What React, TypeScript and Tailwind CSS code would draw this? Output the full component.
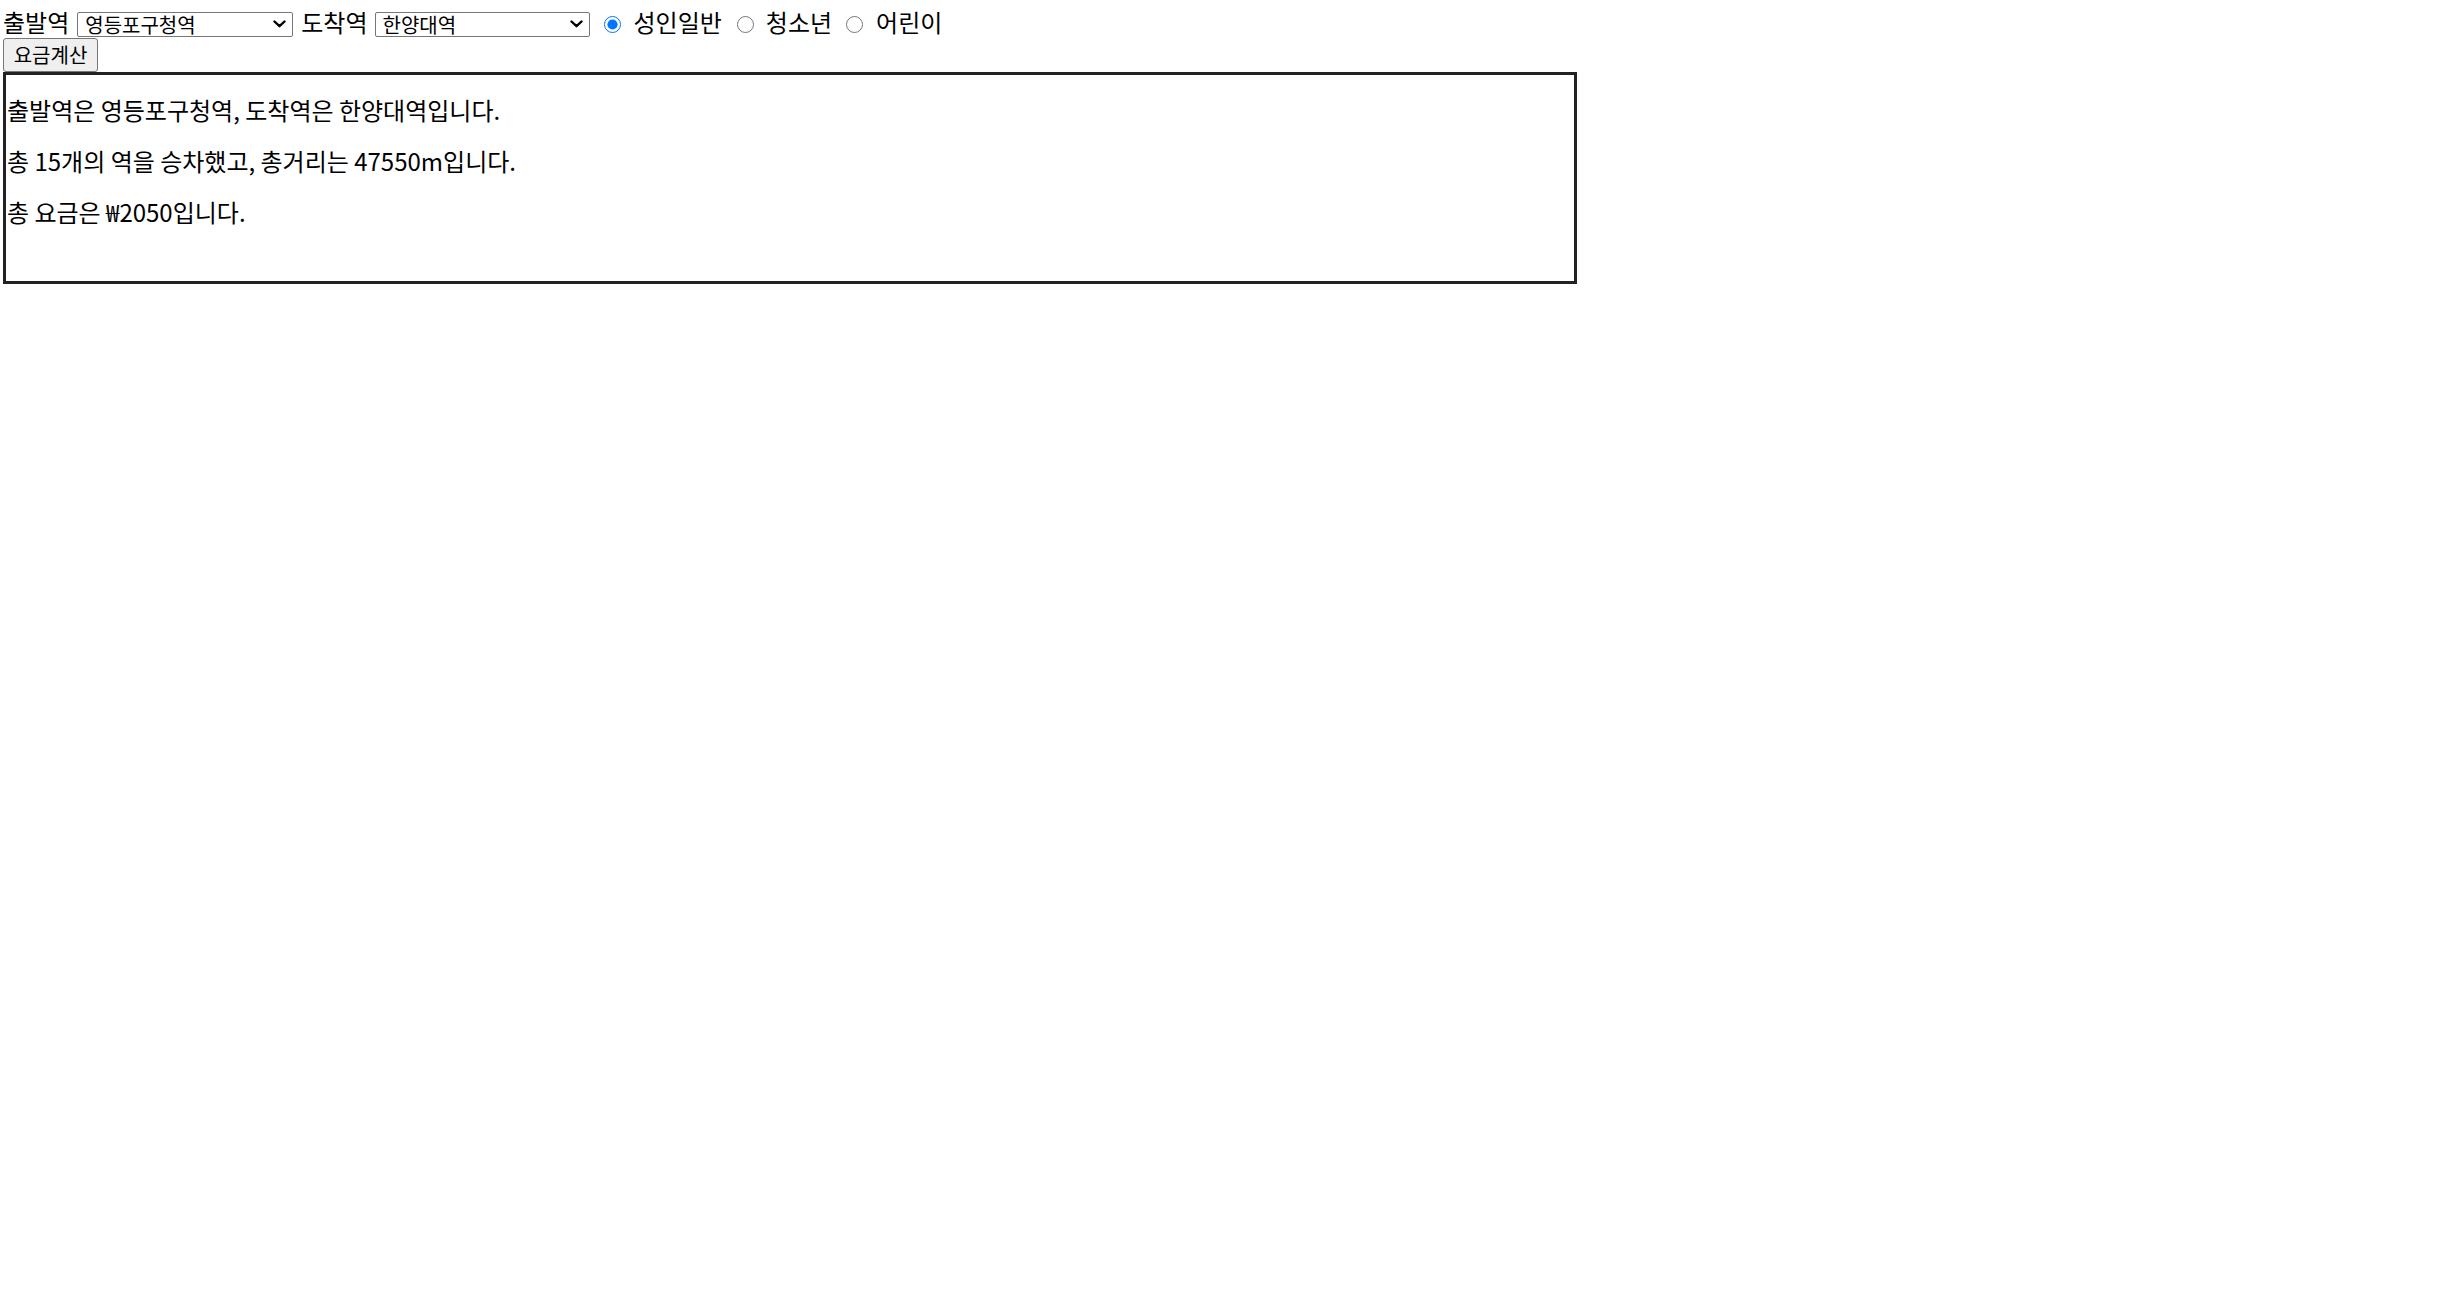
import React from "react";

const stations = ["영등포구청역", "한양대역", "신도림역", "당산역", "왕십리역"];

type SelectProps = {
  value: string;
  width: string;
};

const StationSelect = ({ value, width }: SelectProps) => {
  return (
    <div className={`relative ${width} h-[25px]`}>
      <select
        defaultValue={value}
        className="appearance-none w-full h-full border border-[#767676] rounded-[2px] bg-white pl-[7px] pr-[24px] text-[20px] leading-[23px] text-black outline-none"
      >
        {stations.map((s) => (
          <option key={s} value={s}>
            {s}
          </option>
        ))}
      </select>
      <svg
        className="pointer-events-none absolute right-[7px] top-[8px]"
        width="13"
        height="8"
        viewBox="0 0 13 8"
      >
        <path
          d="M1.5 1.5 L6.5 6.2 L11.5 1.5"
          fill="none"
          stroke="#000"
          strokeWidth="2.4"
          strokeLinecap="round"
          strokeLinejoin="round"
        />
      </svg>
    </div>
  );
};

export default function App() {
  return (
    <div className="min-h-screen bg-white text-black font-['Noto_Sans_CJK_KR',sans-serif] pl-[3px]">
      {/* 검색 조건 */}
      <div className="flex items-center h-[25px] mt-[12px]">
        <span className="text-[24px] leading-[24px] mb-[6px]">출발역</span>
        <div className="ml-[8px]">
          <StationSelect value="영등포구청역" width="w-[216px]" />
        </div>
        <span className="ml-[8px] text-[24px] leading-[24px] mb-[6px]">도착역</span>
        <div className="ml-[7px]">
          <StationSelect value="한양대역" width="w-[215px]" />
        </div>
        <input
          type="radio"
          name="age"
          defaultChecked
          className="ml-[14px] m-0 w-[17px] h-[17px]"
        />
        <span className="ml-[13px] text-[24px] leading-[24px] mb-[6px]">성인일반</span>
        <input type="radio" name="age" className="ml-[15px] m-0 w-[17px] h-[17px]" />
        <span className="ml-[12px] text-[24px] leading-[24px] mb-[6px]">청소년</span>
        <input type="radio" name="age" className="ml-[14px] m-0 w-[17px] h-[17px]" />
        <span className="ml-[13px] text-[24px] leading-[24px] mb-[6px]">어린이</span>
      </div>

      <button className="block mt-[1px] w-[95px] h-[34px] bg-[#efefef] border border-[#767676] rounded-[3px] text-[20px] leading-[24px] text-black">
        요금계산
      </button>

      {/* 결과 */}
      <div className="w-[1574px] h-[212px] border-[3px] border-[#222] pt-[21px] flex flex-col gap-[24px]">
        <p className="text-[24px] leading-[27px] pl-[1px]">
          출발역은 영등포구청역, 도착역은 한양대역입니다.
        </p>
        <p className="text-[24px] leading-[27px] pl-[1px]">
          총 15개의 역을 승차했고, 총거리는 47550m입니다.
        </p>
        <p className="text-[24px] leading-[27px] pl-[1px]">총 요금은 ₩2050입니다.</p>
      </div>
    </div>
  );
}
